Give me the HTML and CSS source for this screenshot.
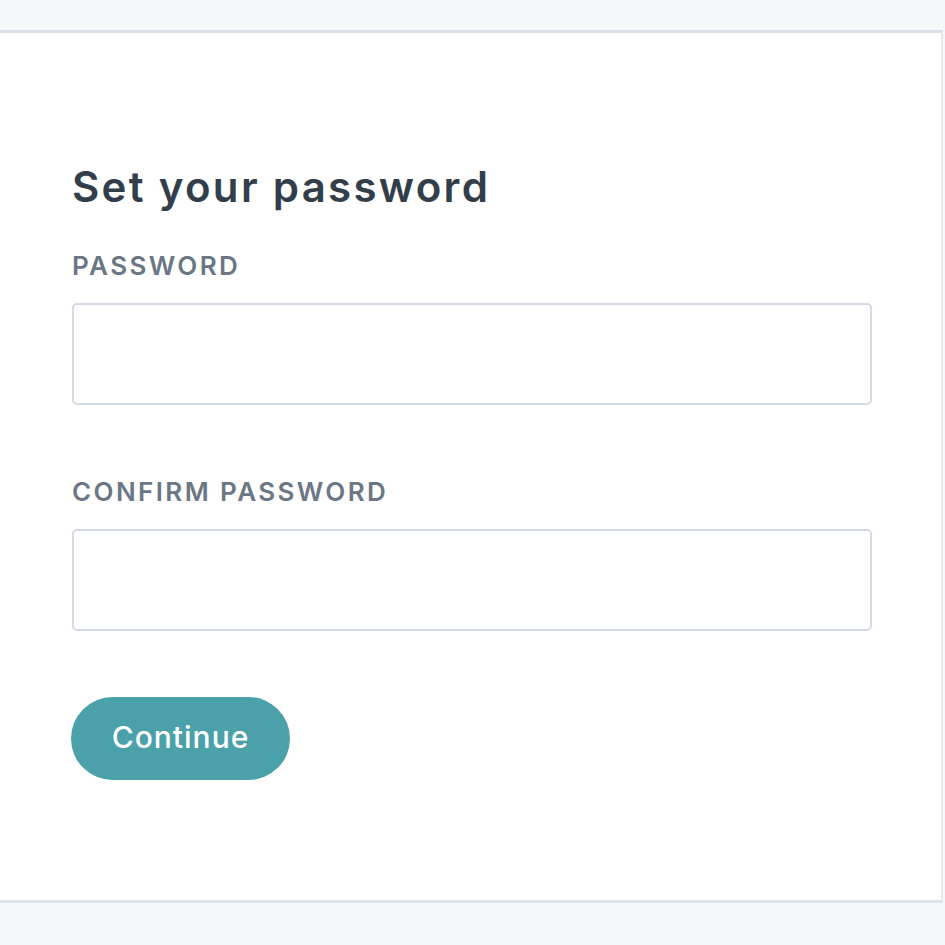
FILE: index.html
```html
<!DOCTYPE html>
<html>
<head>
<meta charset="utf-8">
<link rel="stylesheet" href="styles.css">
</head>
<body>
<div class="top"></div>
<main class="card">
  <h1 class="title">Set your password</h1>
  <div class="field">
    <label class="label">PASSWORD</label>
    <input class="input" type="password">
  </div>
  <div class="field">
    <label class="label">CONFIRM PASSWORD</label>
    <input class="input" type="password">
  </div>
  <button class="btn">Continue</button>
</main>
</body>
</html>
```
FILE: styles.css
```css
html, body { margin: 0; padding: 0; }
body {
  background: #f6f7f9;
  font-family: "Inter", "Noto Sans", sans-serif;
  height: 945px;
  overflow: hidden;
}
.top { height: 30px; }
.card {
  background: #fff;
  border-top: 3px solid #d9dfe6;
  border-bottom: 3px solid #dde3ea;
  border-right: 2px solid #e6eaee;
  width: 943px;
  box-sizing: border-box;
  height: 873px;
  padding: 130px 0 0 72px;
  display: flex;
  flex-direction: column;
}
.title {
  margin: 0;
  font-size: 42px;
  font-weight: 600;
  color: #323e4a;
  line-height: 48px;
  letter-spacing: 2.3px;
}
.field {
  display: flex;
  flex-direction: column;
}
.label {
  margin-top: 40px;
  font-size: 26px;
  font-weight: 600;
  color: #6b7785;
  line-height: 30px;
  letter-spacing: 2.4px;
}
.field + .field .label { margin-top: 72px; }
.input {
  margin-top: 22px;
  width: 800px;
  height: 102px;
  box-sizing: border-box;
  border: 2px solid #d4dbe4;
  border-radius: 5px;
  background: #fff;
  outline: none;
}
.btn {
  margin-top: 66px;
  align-self: flex-start;
  width: 219px;
  height: 83px;
  border: none;
  border-radius: 42px;
  background: #4aa1aa;
  color: #fff;
  font-family: "Inter", "Noto Sans", sans-serif;
  font-size: 30px;
  font-weight: 500;
  letter-spacing: 1px;
  padding: 0 0 3px;
  margin-left: -1px;
}
```
